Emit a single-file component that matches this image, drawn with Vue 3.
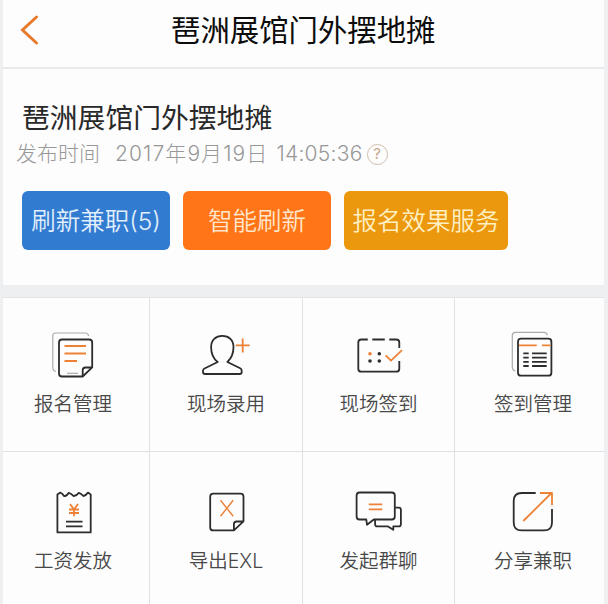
<script setup>
const actions = [
  { label: '报名管理', box: '40 328 66 54', shapes: [
    { c: 'faint', d: 'M55.8 371.3Q52.8 371 52.8 367V336Q52.8 333 56 333H85Q88.2 333 88.6 336' },
    { c: 'ink', d: 'M82.7 376.5H62Q59 376.5 59 373.5V342.7Q59 339.5 62 339.5H89Q92.2 339.5 92.2 342.7V367.3L82.7 376.5V370.3Q82.7 367.5 85.5 367.5H92' },
    { c: 'accent', d: 'M64.5 346H86M64.5 353.5H86M64.5 361H77' },
    { c: 'faint', d: 'M67 373.3H78' },
  ] },
  { label: '现场录用', box: '192.3 328 66 54', shapes: [
    { c: 'ink', d: 'M217 362C213 359 210.4 353 210.4 347C210.4 340 215 335.8 221.6 335.8C228.3 335.8 232.8 340 232.8 347C232.8 353 230.5 358.5 226.7 362L239.5 368.3Q241 369 241 370.8V372Q241 374 239 374H204.3Q202.3 374 202.3 372V370.8Q202.3 369.2 203.8 368.5Z' },
    { c: 'accent', d: 'M235 345.4H249M242 338.4V352.4' },
  ] },
  { label: '现场签到', box: '345.7 328 66 54', shapes: [
    { c: 'ink', d: 'M367.5 339.5H361Q358 339.5 358 342.5V368.7Q358 371.7 361 371.7H396Q399 371.7 399 368.7V361M372 339.5H384.5M389 339.5H396Q399 339.5 399 342.5V348' },
    { c: 'ink-fill', d: 'M377.2 353.7a1.8 1.8 0 1 0 3.6 0a1.8 1.8 0 1 0-3.6 0M367.9 361a1.8 1.8 0 1 0 3.6 0a1.8 1.8 0 1 0-3.6 0M377.2 361a1.8 1.8 0 1 0 3.6 0a1.8 1.8 0 1 0-3.6 0' },
    { c: 'accent-fill', d: 'M367.9 353.7a1.8 1.8 0 1 0 3.6 0a1.8 1.8 0 1 0-3.6 0' },
    { c: 'accent', d: 'M385.3 355.3L390.7 360.7L401.7 350.2' },
  ] },
  { label: '签到管理', box: '500 328 66 54', shapes: [
    { c: 'faint', d: 'M515.5 371Q512.3 370.5 512.3 367V335.3Q512.3 332.3 515.3 332.3H544Q547 332.3 547.2 335.3' },
    { c: 'ink', d: 'M521 338.7H548.4Q551.4 338.7 551.4 341.7V372.7Q551.4 375.7 548.4 375.7H521Q518 375.7 518 372.7V341.7Q518 338.7 521 338.7Z' },
    { c: 'accent', d: 'M519 345.4H536.7M542 345.4H550.5' },
    { c: 'ink', d: 'M523.3 353.3H528.7M523.3 357.6H528.7M523.3 361.8H528.7M523.3 366H528.7M532 353.3H546.7M532 357.6H546.7M532 361.8H546.7M532 366H546.7' },
  ] },
  { label: '工资发放', box: '40 485 66 54', shapes: [
    { c: 'ink', d: 'M57.4 532.4V494.5L60.3 492.6Q62.8 493.4 63.8 495.8Q66.5 496.8 68.8 492.8Q71.3 493.3 73.5 496Q76.3 496.2 78.8 492.8Q81.2 493.6 83.3 496Q85.8 495.6 88 492.6L90.7 494.5V532.4Z' },
    { c: 'accent', d: 'M70 504L74 509.5L78 504M74 509.5V516.3M69 509.5H79M69 513H79' },
    { c: 'ink', d: 'M66 521.7H82.5M66 526.4H82.5' },
  ] },
  { label: '导出EXL', box: '192.5 485 66 54', shapes: [
    { c: 'ink', d: 'M233.4 530.4H212.7Q209.7 530.4 209.7 527.4V496.7Q209.7 493.7 212.7 493.7H240Q243 493.7 243 496.7V521.3L233.4 530.4V524.3Q233.4 521.5 236.2 521.5H243' },
    { c: 'accent thin', d: 'M220 500.3L232.7 516.3M232.7 500.3L220 516.3' },
  ] },
  { label: '发起群聊', box: '345.7 485 66 54', shapes: [
    { c: 'ink', d: 'M366 519.5H359.3Q356.3 519.5 356.3 516.5V495.5Q356.3 492.5 359.3 492.5H391.5Q394.5 492.5 394.5 495.5V516.5Q394.5 519.5 391.5 519.5H373.5L366.7 524.8Z' },
    { c: 'ink', d: 'M395 507.6H398.4Q400.6 507.6 400.6 509.8V524.2Q400.6 526.4 398.4 526.4H393V529.8L387.7 526.4H377Q374.8 526.4 374.8 524.2V520' },
    { c: 'accent', d: 'M368.5 504.3H382M368.5 509.4H382' },
  ] },
  { label: '分享兼职', box: '500 485 66 54', shapes: [
    { c: 'ink', d: 'M535.7 493H521.7Q513.7 493 513.7 501V522.4Q513.7 530.4 521.7 530.4H544Q552 530.4 552 522.4V509' },
    { c: 'accent', d: 'M523.3 521L551.5 493M540 493H552V505.2' },
  ] },
]
</script>

<template>
  <div class="page">
    <header class="bar">
      <svg class="back" viewBox="0 0 22 32"><path d="M18.5 3L4.5 16L18.5 29" /></svg>
      <h1>琶洲展馆门外摆地摊</h1>
    </header>
    <section class="job">
      <h2>琶洲展馆门外摆地摊</h2>
      <div class="meta">
        <span class="key">发布时间</span>
        <span class="date">2017年9月19日</span>
        <span class="time">14:05:36</span>
        <span class="help">?</span>
      </div>
      <div class="buttons">
        <button class="blue">刷新兼职(5)</button>
        <button class="orange">智能刷新</button>
        <button class="amber">报名效果服务</button>
      </div>
    </section>
    <nav class="grid">
      <a v-for="a in actions" :key="a.label" class="cell">
        <svg :viewBox="a.box"><path v-for="(s, i) in a.shapes" :key="i" :class="s.c" :d="s.d" /></svg>
        <span>{{ a.label }}</span>
      </a>
    </nav>
  </div>
</template>

<style>
body { background: #edf0f2; }
</style>

<style scoped>
.page {
  box-sizing: border-box;
  width: 608px;
  height: 604px;
  padding: 0 4px 0 3px;
  overflow: hidden;
  background: #edeff0;
  font-family: Inter, "Noto Sans CJK SC", sans-serif;
  font-weight: 350;
  white-space: nowrap;
}
.bar {
  display: flex;
  align-items: center;
  box-sizing: border-box;
  height: 69px;
  padding: 0 0 7px 15px;
  background: #fdfdfd;
  border-bottom: 2px solid #e8e9ea;
}
.back { width: 22px; height: 32px; }
.back path { fill: none; stroke: #e77a2b; stroke-width: 3; stroke-linecap: round; }
h1, h2 { margin: 0; font-weight: 400; }
h1 { margin-left: 131px; padding-top: 2px; font-size: 29.4px; line-height: 40px; color: #0c0c0c; }
.job {
  box-sizing: border-box;
  height: 216px;
  padding: 29px 0 0 19px;
  background: #fdfdfd;
}
h2 { font-size: 27.8px; line-height: 40px; color: #292929; }
.meta {
  display: flex;
  align-items: center;
  height: 32px;
  margin-left: -6px;
  font-size: 21px;
  line-height: 32px;
  font-weight: 300;
  color: #989898;
}
.date { margin-left: 15px; letter-spacing: 1.1px; }
.time { margin-left: 8px; letter-spacing: 0.25px; }
.help {
  box-sizing: border-box;
  width: 21px;
  height: 21px;
  margin-left: 4px;
  border: 1.5px solid #cfbcaa;
  border-radius: 50%;
  font-size: 15px;
  font-weight: 400;
  line-height: 18px;
  text-align: center;
  color: #c5a78c;
}
.buttons { display: flex; gap: 13px; margin-top: 21px; }
button {
  width: 148px;
  height: 59px;
  padding: 2px 0 0;
  border: 0;
  border-radius: 6px;
  font: inherit;
  font-size: 24.5px;
  line-height: 57px;
}
.blue { background: #317bd1; color: #e2effc; }
.orange { background: #ff7518; color: #ffe6cc; }
.amber { width: 164px; background: #eb980e; color: #fff0c4; }
.grid {
  display: grid;
  grid-template-columns: 147px 153px 152px 149px;
  grid-template-rows: 154px 153px;
  margin-top: 12px;
  border-top: 1px solid #e2e4e5;
}
.cell {
  display: flex;
  flex-direction: column;
  align-items: center;
  box-sizing: border-box;
  padding: 30px 0 0;
  border-right: 1px solid #e0e1e2;
  border-bottom: 1px solid #e0e1e2;
  background: #fdfdfd;
  color: #484848;
}
.cell:nth-child(4n + 1) { padding-right: 6px; }
.cell:nth-child(4n) { padding-left: 7px; border-right: 0; }
.cell:nth-child(n + 5) { padding-top: 33px; border-bottom: 0; }
.cell svg { width: 66px; height: 54px; flex: none; }
.cell span { margin-top: 7px; font-size: 19.5px; line-height: 30px; }
.cell path { fill: none; stroke-width: 1.8; stroke-linejoin: round; }
.cell .ink { stroke: #2d2d2f; }
.cell .faint { stroke: #aaa; stroke-width: 1.2; }
.cell .accent { stroke: #ed8237; }
.cell .thin { stroke-width: 1.4; }
.cell .ink-fill { fill: #2d2d2f; }
.cell .accent-fill { fill: #ed8237; }
</style>
